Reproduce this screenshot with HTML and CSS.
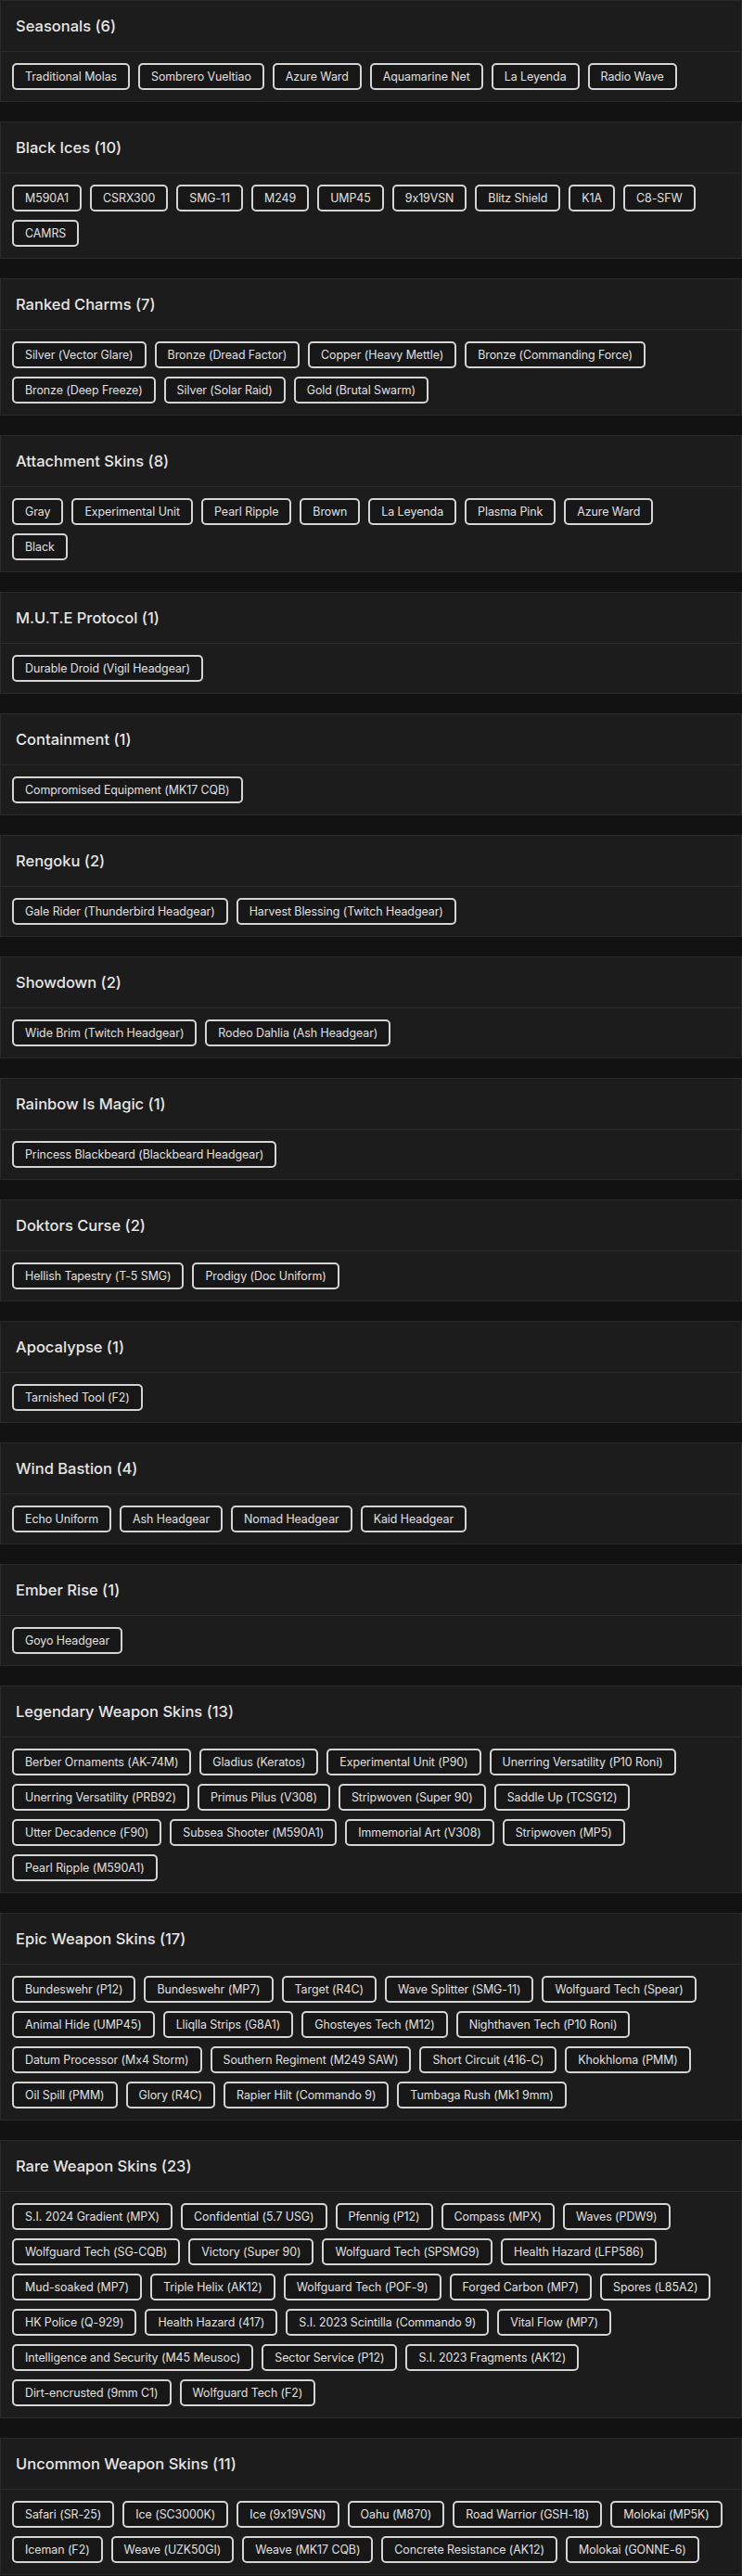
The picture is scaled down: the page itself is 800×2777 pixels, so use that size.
FILE: index.html
```html
<!DOCTYPE html>
<html>
<head>
<meta charset="utf-8">
<link rel="stylesheet" href="styles.css">
</head>
<body>
<main class="list">
  <section class="group">
    <h2 class="group-title">Seasonals (6)</h2>
    <div class="chips">
      <div class="row"><span class="chip">Traditional Molas</span><span class="chip">Sombrero Vueltiao</span><span class="chip">Azure Ward</span><span class="chip">Aquamarine Net</span><span class="chip">La Leyenda</span><span class="chip">Radio Wave</span></div>
    </div>
  </section>
  <section class="group">
    <h2 class="group-title">Black Ices (10)</h2>
    <div class="chips">
      <div class="row"><span class="chip">M590A1</span><span class="chip">CSRX300</span><span class="chip">SMG-11</span><span class="chip">M249</span><span class="chip">UMP45</span><span class="chip">9x19VSN</span><span class="chip">Blitz Shield</span><span class="chip">K1A</span><span class="chip">C8-SFW</span></div>
      <div class="row"><span class="chip">CAMRS</span></div>
    </div>
  </section>
  <section class="group">
    <h2 class="group-title">Ranked Charms (7)</h2>
    <div class="chips">
      <div class="row"><span class="chip">Silver (Vector Glare)</span><span class="chip">Bronze (Dread Factor)</span><span class="chip">Copper (Heavy Mettle)</span><span class="chip">Bronze (Commanding Force)</span></div>
      <div class="row"><span class="chip">Bronze (Deep Freeze)</span><span class="chip">Silver (Solar Raid)</span><span class="chip">Gold (Brutal Swarm)</span></div>
    </div>
  </section>
  <section class="group">
    <h2 class="group-title">Attachment Skins (8)</h2>
    <div class="chips">
      <div class="row"><span class="chip">Gray</span><span class="chip">Experimental Unit</span><span class="chip">Pearl Ripple</span><span class="chip">Brown</span><span class="chip">La Leyenda</span><span class="chip">Plasma Pink</span><span class="chip">Azure Ward</span></div>
      <div class="row"><span class="chip">Black</span></div>
    </div>
  </section>
  <section class="group">
    <h2 class="group-title">M.U.T.E Protocol (1)</h2>
    <div class="chips">
      <div class="row"><span class="chip">Durable Droid (Vigil Headgear)</span></div>
    </div>
  </section>
  <section class="group">
    <h2 class="group-title">Containment (1)</h2>
    <div class="chips">
      <div class="row"><span class="chip">Compromised Equipment (MK17 CQB)</span></div>
    </div>
  </section>
  <section class="group">
    <h2 class="group-title">Rengoku (2)</h2>
    <div class="chips">
      <div class="row"><span class="chip">Gale Rider (Thunderbird Headgear)</span><span class="chip">Harvest Blessing (Twitch Headgear)</span></div>
    </div>
  </section>
  <section class="group">
    <h2 class="group-title">Showdown (2)</h2>
    <div class="chips">
      <div class="row"><span class="chip">Wide Brim (Twitch Headgear)</span><span class="chip">Rodeo Dahlia (Ash Headgear)</span></div>
    </div>
  </section>
  <section class="group">
    <h2 class="group-title">Rainbow Is Magic (1)</h2>
    <div class="chips">
      <div class="row"><span class="chip">Princess Blackbeard (Blackbeard Headgear)</span></div>
    </div>
  </section>
  <section class="group">
    <h2 class="group-title">Doktors Curse (2)</h2>
    <div class="chips">
      <div class="row"><span class="chip">Hellish Tapestry (T-5 SMG)</span><span class="chip">Prodigy (Doc Uniform)</span></div>
    </div>
  </section>
  <section class="group">
    <h2 class="group-title">Apocalypse (1)</h2>
    <div class="chips">
      <div class="row"><span class="chip">Tarnished Tool (F2)</span></div>
    </div>
  </section>
  <section class="group">
    <h2 class="group-title">Wind Bastion (4)</h2>
    <div class="chips">
      <div class="row"><span class="chip">Echo Uniform</span><span class="chip">Ash Headgear</span><span class="chip">Nomad Headgear</span><span class="chip">Kaid Headgear</span></div>
    </div>
  </section>
  <section class="group">
    <h2 class="group-title">Ember Rise (1)</h2>
    <div class="chips">
      <div class="row"><span class="chip">Goyo Headgear</span></div>
    </div>
  </section>
  <section class="group">
    <h2 class="group-title">Legendary Weapon Skins (13)</h2>
    <div class="chips">
      <div class="row"><span class="chip">Berber Ornaments (AK-74M)</span><span class="chip">Gladius (Keratos)</span><span class="chip">Experimental Unit (P90)</span><span class="chip">Unerring Versatility (P10 Roni)</span></div>
      <div class="row"><span class="chip">Unerring Versatility (PRB92)</span><span class="chip">Primus Pilus (V308)</span><span class="chip">Stripwoven (Super 90)</span><span class="chip">Saddle Up (TCSG12)</span></div>
      <div class="row"><span class="chip">Utter Decadence (F90)</span><span class="chip">Subsea Shooter (M590A1)</span><span class="chip">Immemorial Art (V308)</span><span class="chip">Stripwoven (MP5)</span></div>
      <div class="row"><span class="chip">Pearl Ripple (M590A1)</span></div>
    </div>
  </section>
  <section class="group">
    <h2 class="group-title">Epic Weapon Skins (17)</h2>
    <div class="chips">
      <div class="row"><span class="chip">Bundeswehr (P12)</span><span class="chip">Bundeswehr (MP7)</span><span class="chip">Target (R4C)</span><span class="chip">Wave Splitter (SMG-11)</span><span class="chip">Wolfguard Tech (Spear)</span></div>
      <div class="row"><span class="chip">Animal Hide (UMP45)</span><span class="chip">Lliqlla Strips (G8A1)</span><span class="chip">Ghosteyes Tech (M12)</span><span class="chip">Nighthaven Tech (P10 Roni)</span></div>
      <div class="row"><span class="chip">Datum Processor (Mx4 Storm)</span><span class="chip">Southern Regiment (M249 SAW)</span><span class="chip">Short Circuit (416-C)</span><span class="chip">Khokhloma (PMM)</span></div>
      <div class="row"><span class="chip">Oil Spill (PMM)</span><span class="chip">Glory (R4C)</span><span class="chip">Rapier Hilt (Commando 9)</span><span class="chip">Tumbaga Rush (Mk1 9mm)</span></div>
    </div>
  </section>
  <section class="group">
    <h2 class="group-title">Rare Weapon Skins (23)</h2>
    <div class="chips">
      <div class="row"><span class="chip">S.I. 2024 Gradient (MPX)</span><span class="chip">Confidential (5.7 USG)</span><span class="chip">Pfennig (P12)</span><span class="chip">Compass (MPX)</span><span class="chip">Waves (PDW9)</span></div>
      <div class="row"><span class="chip">Wolfguard Tech (SG-CQB)</span><span class="chip">Victory (Super 90)</span><span class="chip">Wolfguard Tech (SPSMG9)</span><span class="chip">Health Hazard (LFP586)</span></div>
      <div class="row"><span class="chip">Mud-soaked (MP7)</span><span class="chip">Triple Helix (AK12)</span><span class="chip">Wolfguard Tech (POF-9)</span><span class="chip">Forged Carbon (MP7)</span><span class="chip">Spores (L85A2)</span></div>
      <div class="row"><span class="chip">HK Police (Q-929)</span><span class="chip">Health Hazard (417)</span><span class="chip">S.I. 2023 Scintilla (Commando 9)</span><span class="chip">Vital Flow (MP7)</span></div>
      <div class="row"><span class="chip">Intelligence and Security (M45 Meusoc)</span><span class="chip">Sector Service (P12)</span><span class="chip">S.I. 2023 Fragments (AK12)</span></div>
      <div class="row"><span class="chip">Dirt-encrusted (9mm C1)</span><span class="chip">Wolfguard Tech (F2)</span></div>
    </div>
  </section>
  <section class="group">
    <h2 class="group-title">Uncommon Weapon Skins (11)</h2>
    <div class="chips">
      <div class="row"><span class="chip">Safari (SR-25)</span><span class="chip">Ice (SC3000K)</span><span class="chip">Ice (9x19VSN)</span><span class="chip">Oahu (M870)</span><span class="chip">Road Warrior (GSH-18)</span><span class="chip">Molokai (MP5K)</span></div>
      <div class="row"><span class="chip">Iceman (F2)</span><span class="chip">Weave (UZK50GI)</span><span class="chip">Weave (MK17 CQB)</span><span class="chip">Concrete Resistance (AK12)</span><span class="chip">Molokai (GONNE-6)</span></div>
    </div>
  </section>
</main>
</body>
</html>
```

FILE: styles.css
```css
html, body {
  margin: 0;
  padding: 0;
  background: #121212;
}

body {
  font-family: Inter, "Noto Sans", sans-serif;
  font-feature-settings: "calt" 0;
  color: #e2e2e2;
}

.list {
  display: flex;
  flex-direction: column;
  gap: 21px;
}

.group {
  background: #1c1c1c;
  border: 1px solid #2a2a2a;
}

.group-title {
  margin: 0;
  padding: 17px 16px 16px;
  font-size: 16.5px;
  line-height: 21px;
  font-weight: 500;
  color: #e6e6e6;
  border-bottom: 1px solid #2c2c2c;
}

.chips {
  display: flex;
  flex-direction: column;
  gap: 9px;
  padding: 12px;
}

.row {
  display: flex;
  gap: 9px;
}

.chip {
  box-sizing: border-box;
  height: 29px;
  display: inline-flex;
  align-items: center;
  flex: none;
  padding: 0 12px;
  border: 2px solid #d4d4d4;
  border-radius: 5px;
  background: #171717;
  font-size: 12.4px;
  letter-spacing: -0.05px;
  color: #e0e0e0;
  white-space: nowrap;
}
```
